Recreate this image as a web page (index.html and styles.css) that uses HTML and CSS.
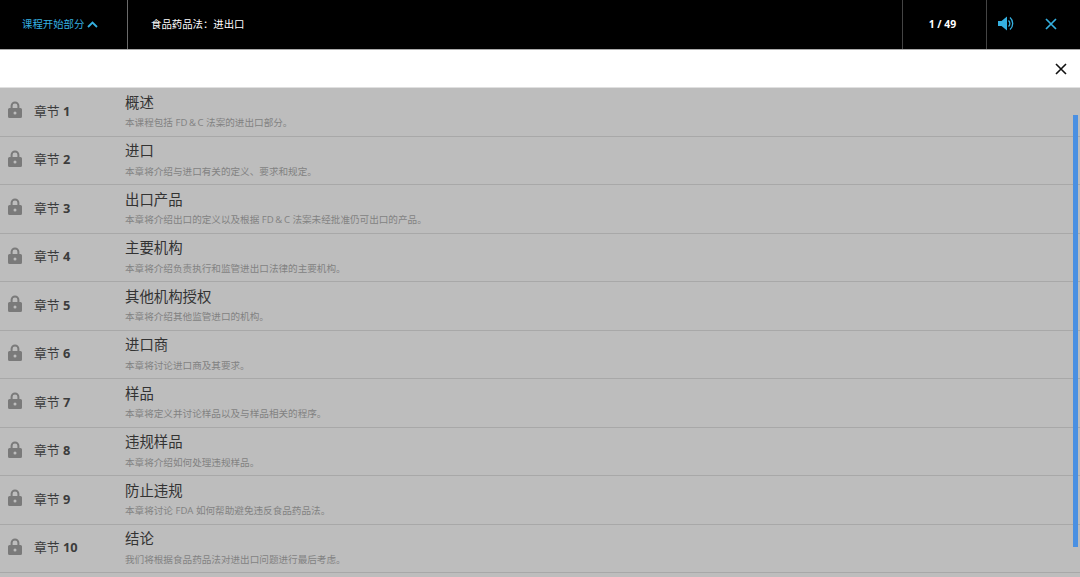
FILE: index.html
```html
<!DOCTYPE html>
<html lang="zh-CN">
<head>
    <meta charset="UTF-8">
    <meta name="viewport" content="width=device-width, initial-scale=1.0">
    <link rel="stylesheet" href="styles.css">
    <title>食品药品法：进出口</title>
</head>
<body>
    <svg class="icon-defs" width="0" height="0">
        <symbol id="lock" viewBox="0 0 14 17">
            <path d="M3.600 8V4.800a3.400 3.400 0 0 1 6.800 0V8" fill="none" stroke="#7a7a7a" stroke-width="2"/>
            <path fill-rule="evenodd" d="M1.500 7h11A1.500 1.500 0 0 1 14 8.500v7a1.500 1.500 0 0 1-1.500 1.500h-11A1.500 1.500 0 0 1 0 15.500v-7A1.500 1.500 0 0 1 1.500 7zM7 10.500a1.500 1.500 0 1 0 0 3 1.500 1.500 0 0 0 0-3z" fill="#7a7a7a"/>
        </symbol>
    </svg>

    <header class="topbar">
        <button class="menu-toggle" type="button">
            课程开始部分
            <svg class="chevron" width="11" height="7" viewBox="0 0 11 7"><path d="M1 6l4.500-4.500L10 6" fill="none" stroke="currentColor" stroke-width="1.800"/></svg>
        </button>
        <div class="course-title">食品药品法：进出口</div>
        <div class="page-count">1 / 49</div>
        <div class="sound">
            <svg width="16" height="15" viewBox="0 0 16 15">
                <path d="M0 5h3.500L9 .5v14L3.500 10H0z" fill="#35b0e0"/>
                <path d="M10.500 4.500a4 4 0 0 1 0 6" fill="none" stroke="#35b0e0" stroke-width="1.300"/>
                <path d="M12 1.500a8 8 0 0 1 0 12" fill="none" stroke="#35b0e0" stroke-width="1.300"/>
            </svg>
        </div>
        <div class="exit">
            <svg width="12" height="12" viewBox="0 0 12 12"><path d="M1 1l10 10M11 1L1 11" stroke="#35b0e0" stroke-width="1.700"/></svg>
        </div>
    </header>

    <div class="panel-head">
        <svg width="12" height="12" viewBox="0 0 12 12"><path d="M1 1l10 10M11 1L1 11" stroke="#111" stroke-width="1.600"/></svg>
    </div>

    <div class="chapters">
        <ul class="chapter-list">
            <li class="chapter">
                <svg class="lock" width="14" height="17"><use href="#lock"/></svg>
                <div class="chapter-no">章节 <b>1</b></div>
                <div class="chapter-text"><h3>概述</h3><p>本课程包括 FD&#8201;&amp;&#8201;C 法案的进出口部分。</p></div>
            </li>
            <li class="chapter">
                <svg class="lock" width="14" height="17"><use href="#lock"/></svg>
                <div class="chapter-no">章节 <b>2</b></div>
                <div class="chapter-text"><h3>进口</h3><p>本章将介绍与进口有关的定义、要求和规定。</p></div>
            </li>
            <li class="chapter">
                <svg class="lock" width="14" height="17"><use href="#lock"/></svg>
                <div class="chapter-no">章节 <b>3</b></div>
                <div class="chapter-text"><h3>出口产品</h3><p>本章将介绍出口的定义以及根据 FD&#8201;&amp;&#8201;C 法案未经批准仍可出口的产品。</p></div>
            </li>
            <li class="chapter">
                <svg class="lock" width="14" height="17"><use href="#lock"/></svg>
                <div class="chapter-no">章节 <b>4</b></div>
                <div class="chapter-text"><h3>主要机构</h3><p>本章将介绍负责执行和监管进出口法律的主要机构。</p></div>
            </li>
            <li class="chapter">
                <svg class="lock" width="14" height="17"><use href="#lock"/></svg>
                <div class="chapter-no">章节 <b>5</b></div>
                <div class="chapter-text"><h3>其他机构授权</h3><p>本章将介绍其他监管进口的机构。</p></div>
            </li>
            <li class="chapter">
                <svg class="lock" width="14" height="17"><use href="#lock"/></svg>
                <div class="chapter-no">章节 <b>6</b></div>
                <div class="chapter-text"><h3>进口商</h3><p>本章将讨论进口商及其要求。</p></div>
            </li>
            <li class="chapter">
                <svg class="lock" width="14" height="17"><use href="#lock"/></svg>
                <div class="chapter-no">章节 <b>7</b></div>
                <div class="chapter-text"><h3>样品</h3><p>本章将定义并讨论样品以及与样品相关的程序。</p></div>
            </li>
            <li class="chapter">
                <svg class="lock" width="14" height="17"><use href="#lock"/></svg>
                <div class="chapter-no">章节 <b>8</b></div>
                <div class="chapter-text"><h3>违规样品</h3><p>本章将介绍如何处理违规样品。</p></div>
            </li>
            <li class="chapter">
                <svg class="lock" width="14" height="17"><use href="#lock"/></svg>
                <div class="chapter-no">章节 <b>9</b></div>
                <div class="chapter-text"><h3>防止违规</h3><p>本章将讨论 FDA 如何帮助避免违反食品药品法。</p></div>
            </li>
            <li class="chapter">
                <svg class="lock" width="14" height="17"><use href="#lock"/></svg>
                <div class="chapter-no">章节 <b>10</b></div>
                <div class="chapter-text"><h3>结论</h3><p>我们将根据食品药品法对进出口问题进行最后考虑。</p></div>
            </li>
        </ul>
        <div class="scroll-thumb"></div>
    </div>
</body>
</html>
```

FILE: styles.css
```css
html, body {
    height: 100%;
}

body {
    margin: 0;
    overflow: hidden;
    display: flex;
    flex-direction: column;
    background-color: #bdbdbd;
    font-family: 'Open Sans', 'Noto Sans CJK SC', sans-serif;
}

.icon-defs {
    display: none;
}

.topbar {
    flex: none;
    height: 49px;
    display: flex;
    align-items: stretch;
    background-color: black;
    border-bottom: 1px solid #aaa;
    font-size: 10.4px;
    line-height: 48px;
    color: white;
}

.menu-toggle {
    width: 128px;
    box-sizing: border-box;
    padding: 0 0 1px 22px;
    display: flex;
    align-items: center;
    gap: 3px;
    background: none;
    border: none;
    border-right: 1px solid #6a6a6a;
    color: #35b0e0;
    font: inherit;
}

.course-title {
    flex: 1;
    padding-left: 23px;
}

.page-count {
    width: 84px;
    box-sizing: border-box;
    padding-right: 4px;
    text-align: center;
    font-weight: 700;
    border-left: 1px solid #444;
}

.sound {
    width: 41px;
    box-sizing: border-box;
    display: flex;
    align-items: center;
    padding-left: 11px;
    padding-bottom: 2px;
    border-left: 1px solid #444;
}

.exit {
    width: 53px;
    box-sizing: border-box;
    display: flex;
    align-items: center;
    padding-left: 18px;
    padding-bottom: 2px;
}

.panel-head {
    flex: none;
    height: 38px;
    box-sizing: border-box;
    display: flex;
    align-items: center;
    justify-content: flex-end;
    padding-right: 13px;
    background-color: white;
    border-bottom: 1px solid #e0e0e0;
}

.chapters {
    flex: 1;
    position: relative;
    overflow: hidden;
}

.chapter-list {
    list-style: none;
    margin: 0;
    padding: 0;
}

.chapter {
    height: 48.5px;
    box-sizing: border-box;
    display: flex;
    align-items: center;
    border-bottom: 1px solid #a8a8a8;
}

.lock {
    flex: none;
    margin: 0 0 4px 8px;
}

.chapter-no {
    width: 91px;
    flex: none;
    margin: 0 0 3px 12px;
    font-size: 12.8px;
    color: #3c3c3c;
}

.chapter-no b {
    font-weight: 700;
}

.chapter-text h3 {
    margin: -0.5px 0 0;
    font-size: 14.4px;
    line-height: 20px;
    font-weight: 400;
    color: #333;
}

.chapter-text p {
    margin: 3.5px 0 0;
    font-size: 9.6px;
    line-height: 14px;
    color: #828282;
}

.scroll-thumb {
    position: absolute;
    top: 27px;
    right: 2px;
    width: 5px;
    height: 432px;
    background-color: #4a90e2;
}
```
